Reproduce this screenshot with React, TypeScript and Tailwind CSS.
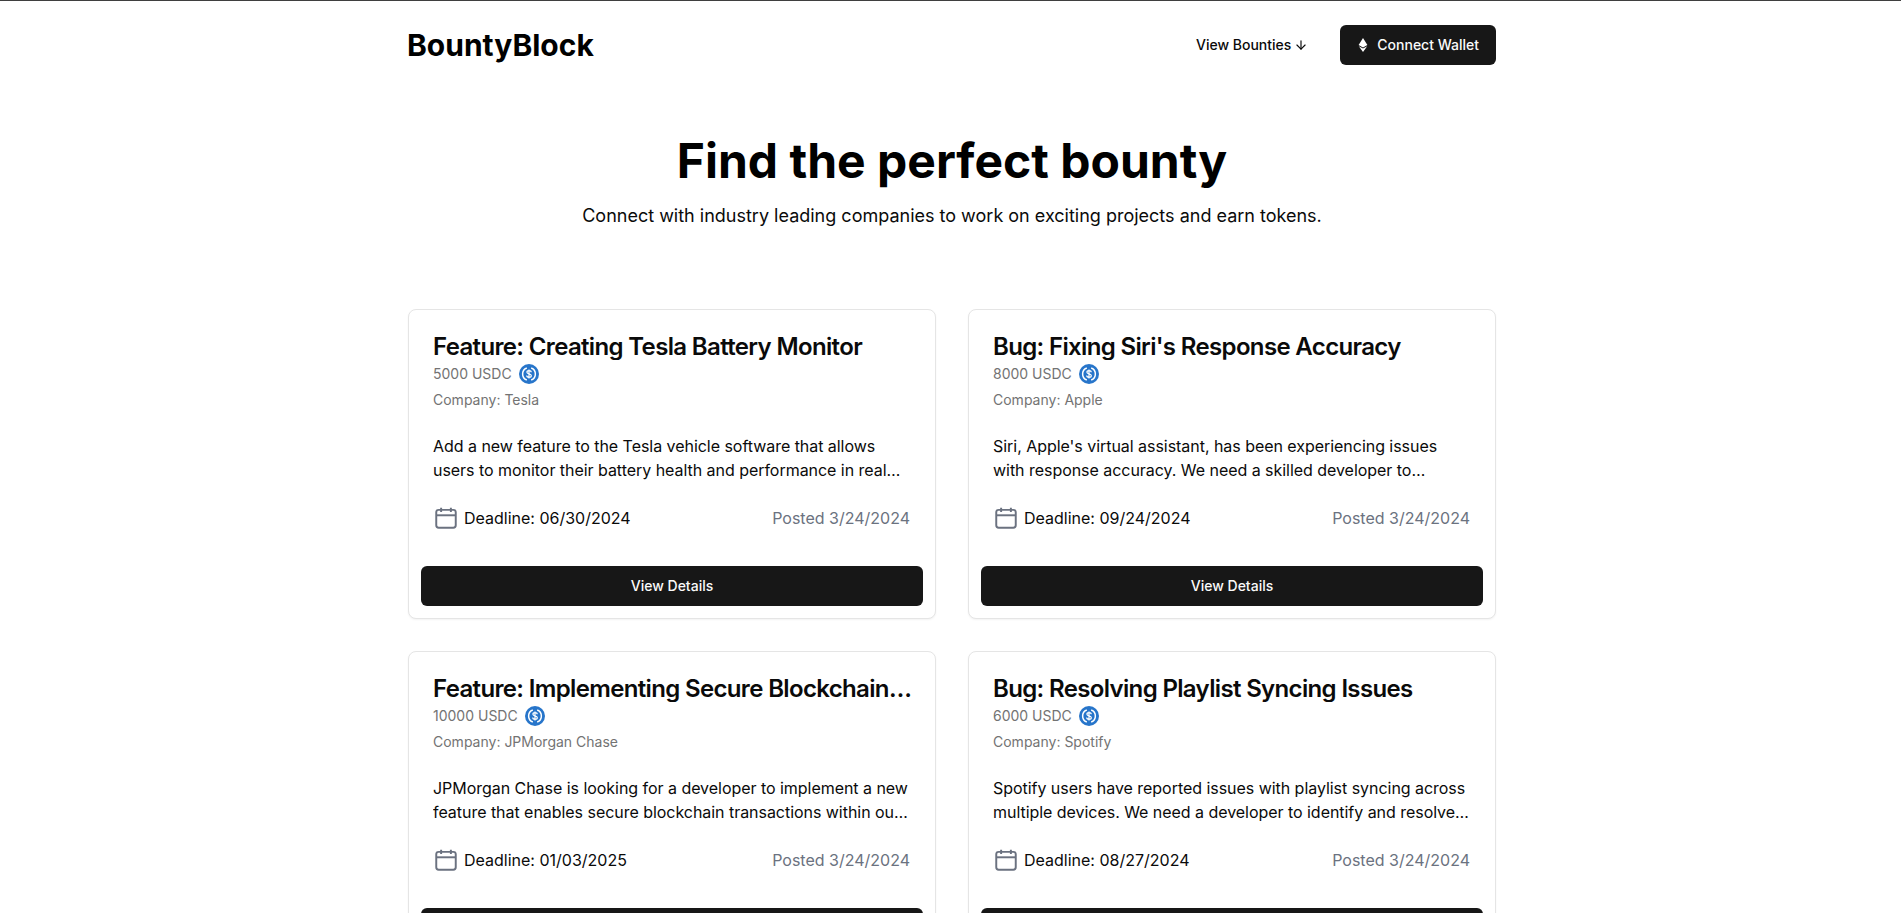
import { ArrowDown } from "lucide-react";

const bounties = [
  {
    id: 1,
    title: "Feature: Creating Tesla Battery Monitor",
    amount: "5000 USDC",
    company: "Tesla",
    description:
      "Add a new feature to the Tesla vehicle software that allows users to monitor their battery health and performance in real time from the mobile application.",
    deadline: "06/30/2024",
  },
  {
    id: 2,
    title: "Bug: Fixing Siri's Response Accuracy",
    amount: "8000 USDC",
    company: "Apple",
    description:
      "Siri, Apple's virtual assistant, has been experiencing issues with response accuracy. We need a skilled developer to investigate the root cause and fix it.",
    deadline: "09/24/2024",
  },
  {
    id: 3,
    title: "Feature: Implementing Secure Blockchain Transactions",
    amount: "10000 USDC",
    company: "JPMorgan Chase",
    description:
      "JPMorgan Chase is looking for a developer to implement a new feature that enables secure blockchain transactions within our online banking platform.",
    deadline: "01/03/2025",
  },
  {
    id: 4,
    title: "Bug: Resolving Playlist Syncing Issues",
    amount: "6000 USDC",
    company: "Spotify",
    description:
      "Spotify users have reported issues with playlist syncing across multiple devices. We need a developer to identify and resolve the underlying problem quickly.",
    deadline: "08/27/2024",
  },
];

const EthIcon = () => (
  <svg width="16" height="16" viewBox="0 0 16 16" className="mr-[6px]">
    <path d="M8 1 3.6 8 8 10.4 12.4 8 8 1Z" fill="#fff" />
    <path d="M3.8 9.2 8 15l4.2-5.8L8 11.6 3.8 9.2Z" fill="#fff" />
  </svg>
);

const UsdcIcon = () => (
  <svg width="20" height="20" viewBox="0 0 20 20">
    <circle cx="10" cy="10" r="10" fill="#2775ca" />
    <path d="M7.8 4a6.4 6.4 0 0 0 0 12" fill="none" stroke="#fff" strokeWidth="1.5" />
    <path d="M12.2 4a6.4 6.4 0 0 1 0 12" fill="none" stroke="#fff" strokeWidth="1.5" />
    <path
      d="M12.2 8.3c0-1-.9-1.6-2.2-1.6s-2.1.6-2.1 1.5c0 2.2 4.4 1.2 4.4 3.5 0 1-.9 1.6-2.3 1.6s-2.3-.6-2.3-1.7M10 5.6v8.8"
      fill="none"
      stroke="#fff"
      strokeWidth="1.2"
    />
  </svg>
);

const CalendarIcon = () => (
  <svg width="26" height="26" viewBox="0 0 24 24" fill="none" stroke="#6b7280" strokeWidth="1.8" className="shrink-0">
    <path d="M7.5 2.5v4M16.5 2.5v4" />
    <rect x="3" y="4.5" width="18" height="16.5" rx="2.25" />
    <path d="M3 9.5h18" />
  </svg>
);

const BountyCard = ({ bounty }: { bounty: (typeof bounties)[number] }) => (
  <div className="bg-white rounded-lg border border-[#e5e5e5] shadow-xs flex flex-col">
    <div className="px-6 pt-6 pb-0">
      <h3 className="text-2xl font-semibold leading-[26px] tracking-[-0.65px] text-[#0a0a0a] truncate -mr-[3px]">
        {bounty.title}
      </h3>
      <div className="flex items-center gap-[7px] mt-1 text-sm leading-5 text-[#737373]">
        <span>{bounty.amount}</span>
        <UsdcIcon />
      </div>
      <p className="mt-1.5 text-sm leading-5 text-[#737373]">Company: {bounty.company}</p>
    </div>
    <div className="px-6 pt-6">
      <p className="text-base leading-6 tracking-[-0.04px] text-[#0a0a0a] line-clamp-2">{bounty.description}</p>
    </div>
    <div className="pl-6 pr-[25px] pt-6 flex items-center justify-between h-[48px]">
      <div className="flex items-center gap-[5px]">
        <CalendarIcon />
        <span className="text-base text-[#0a0a0a]">Deadline: {bounty.deadline}</span>
      </div>
      <span className="text-base text-[#6b7280]">Posted 3/24/2024</span>
    </div>
    <div className="px-3 pt-9 pb-3">
      <button className="w-full h-10 rounded-md bg-[#171717] text-[#fafafa] text-sm font-medium">
        View Details
      </button>
    </div>
  </div>
);

export default function App() {
  return (
    <div className="min-h-screen bg-white border-t border-[#3f3f3f] font-['Inter',sans-serif] text-black">
      <div className="w-[1088px] ml-[408px]">
        <header className="flex items-center justify-between h-[88px]">
          <h2 className="text-3xl font-bold -ml-px">BountyBlock</h2>
          <nav className="flex items-center gap-4">
            <a className="flex items-center h-10 px-4 text-sm font-medium text-[#0a0a0a]">
              View Bounties
              <ArrowDown size={14} className="ml-[3px]" />
            </a>
            <button className="flex items-center h-10 pl-[15px] pr-[17px] rounded-md bg-[#171717] text-[#fafafa] text-sm font-medium">
              <EthIcon />
              Connect Wallet
            </button>
          </nav>
        </header>
        <section className="text-center pt-[48px] pb-[79px]">
          <h1 className="text-5xl font-bold leading-[48px]">Find the perfect bounty</h1>
          <p className="mt-[17px] text-lg leading-7 text-[#0a0a0a]">
            Connect with industry leading companies to work on exciting projects and earn tokens.
          </p>
        </section>
        <div className="grid grid-cols-2 gap-8">
          {bounties.map((bounty) => (
            <BountyCard key={bounty.id} bounty={bounty} />
          ))}
        </div>
      </div>
    </div>
  );
}
